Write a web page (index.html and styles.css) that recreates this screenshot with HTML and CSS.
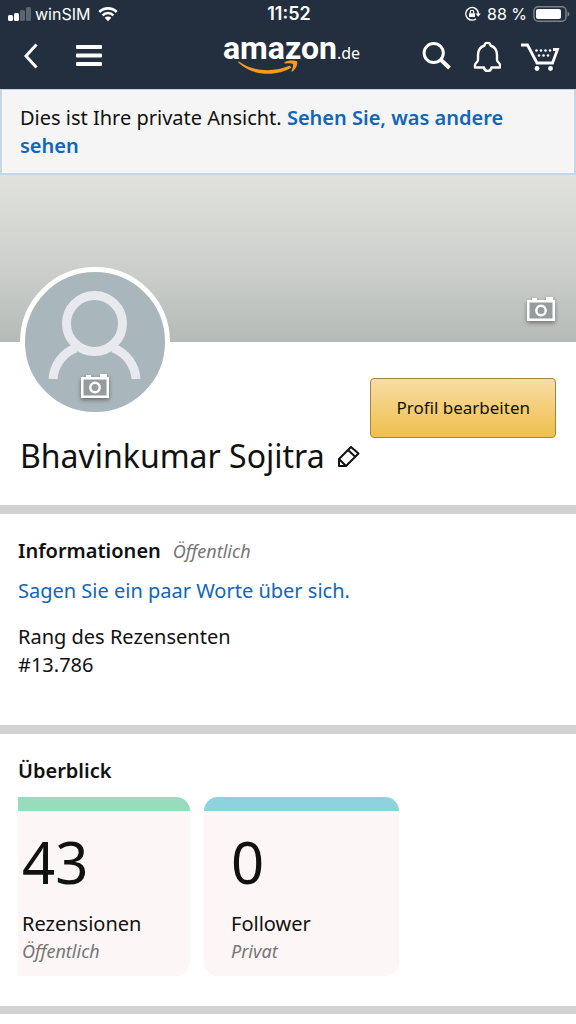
FILE: index.html
```html
<!DOCTYPE html>
<html lang="de">
<head>
<meta charset="utf-8">
<meta name="viewport" content="width=device-width, initial-scale=1">
<title>Profil</title>
<link rel="stylesheet" href="styles.css">
</head>
<body>
<svg class="defs" aria-hidden="true">
  <symbol id="camera" viewBox="0 0 32 28">
    <path d="M3 4h4V2h5v2h9V1h7v3h2v21H2V4z" fill="#fff"/>
    <path d="M4.500 6.500h23V22.500h-23z" fill="#949c9e"/>
    <circle cx="16" cy="14.500" r="4.700" fill="none" stroke="#fff" stroke-width="2.400"/>
  </symbol>
</svg>

<header class="top">
  <div class="status">
    <div class="status-group">
      <svg width="23" height="16" viewBox="0 0 23 16" aria-hidden="true">
        <g fill="#fff"><rect y="9" width="5" height="6" rx="1.500"/><rect x="6" y="7" width="5" height="8" rx="1.500"/></g>
        <g fill="#5c6471"><rect x="12" y="4" width="5" height="11" rx="1.500"/><rect x="18" y="1" width="5" height="14" rx="1.500"/></g>
      </svg>
      <span class="carrier">winSIM</span>
      <svg class="wifi" width="20" height="16" viewBox="0 0 20 16" fill="none" stroke="#fff" stroke-width="2.600" aria-hidden="true">
        <path d="M1.300 6a12.300 12.300 0 0 1 17.400 0M4.600 9.300a7.600 7.600 0 0 1 10.800 0"/>
        <path d="M10 15.200 6.700 11.800a4.700 4.700 0 0 1 6.600 0z" fill="#fff" stroke="none"/>
      </svg>
    </div>
    <time class="clock">11:52</time>
    <div class="status-group status-end">
      <svg width="17" height="16" viewBox="0 0 17 16" fill="none" stroke="#fff" stroke-width="1.500" aria-hidden="true">
        <path d="M11 2.200A6.300 6.300 0 1 0 12 12.800M10.500 2a6.300 6.300 0 0 1 3.700 6"/>
        <path d="m11.500 7.500 2.700 3.200 2.600-3.200z" fill="#fff" stroke="none"/>
        <path d="M5 7.300h6V11H5z" fill="#fff" stroke="none"/><path d="M6.300 7.500V6a1.700 1.700 0 0 1 3.400 0v1.500" stroke-width="1.200"/>
      </svg>
      <span>88 %</span>
      <svg width="37" height="16" viewBox="0 0 37 16" aria-hidden="true">
        <rect x="1" y=".800" width="32" height="14.400" rx="4" fill="none" stroke="#7b828c" stroke-width="1.500"/>
        <rect x="3" y="3" width="25" height="10" rx="2" fill="#fff"/>
        <path d="M34.500 5.500q2 .5 2 2.500t-2 2.500z" fill="#7b828c"/>
      </svg>
    </div>
  </div>
  <nav class="nav" aria-label="Hauptnavigation">
    <div class="nav-group">
      <button class="icon-btn" aria-label="Zurück"><svg width="15" height="26" viewBox="0 0 15 26" fill="none" stroke="#fff" stroke-width="3"><path d="M13.500 1.500 3 13l10.500 11.500"/></svg></button>
      <button class="icon-btn" aria-label="Menü"><svg width="26" height="24" viewBox="0 0 26 24" fill="#fff"><rect y="1" width="26" height="4" rx="1"/><rect y="9.500" width="26" height="4" rx="1"/><rect y="18" width="26" height="4" rx="1"/></svg></button>
    </div>
    <a class="logo" href="#" aria-label="amazon.de"><span class="logo-name">amazon</span><span class="logo-tld">.de</span>
      <svg class="smile" width="62" height="15" viewBox="0 0 62 15" fill="#f79b1e" aria-hidden="true">
        <path d="M1 1.500C15 12 36 12.500 52 5.500l1.300 2.300C39 16.500 14 16.500 .300 2.600q-.5-1.500.7-1.100z"/>
        <path d="M46.500 2.500C49 .3 56 0 59 1.300c1 3.200-1 7.500-4.200 10-1 .7-1.700.2-1.200-.8 1-2.300 1.900-5 1.300-6.300-1-1.100-4.300-1-7.400-.6-1 0-1.500-.5-1-1.100z"/>
      </svg>
    </a>
    <div class="nav-group nav-end">
      <button class="icon-btn" aria-label="Suche"><svg width="30" height="30" viewBox="0 0 30 30" fill="none" stroke="#fff" stroke-width="3"><circle cx="11.700" cy="12" r="9.600"/><path d="m18.500 18.500 9 8.500" stroke-width="4"/></svg></button>
      <button class="icon-btn" aria-label="Mitteilungen"><svg width="30" height="32" viewBox="0 0 30 32" fill="none" stroke="#fff" stroke-width="2.400" stroke-linejoin="round"><path d="M13.500 5.500C13.500 2 19.500 2 19.500 5.500c4.500 1.500 6.500 5.500 6.500 9.500V20c0 2 3 3 3 5v2.500h-8.500C20 32 13.500 32 13 27.500H4V25c0-2 3-3 3-5v-5c0-4 2-8 6.500-9.500z"/></svg></button>
      <button class="icon-btn" aria-label="Einkaufswagen"><svg width="40" height="32" viewBox="0 0 40 32" fill="none" stroke="#fff" stroke-width="2.800"><path d="M1 5h6.500L17 23h15.500L37.500 9.500H33"/><g fill="#fff" stroke="none"><circle cx="17" cy="28.500" r="2.400"/><circle cx="30.500" cy="28.500" r="2.400"/><circle cx="16.500" cy="10.500" r="1.300"/><circle cx="21" cy="10.500" r="1.300"/><circle cx="25.500" cy="10.500" r="1.300"/><circle cx="30" cy="10.500" r="1.300"/><circle cx="19" cy="15.500" r="1.300"/><circle cx="23.500" cy="15.500" r="1.300"/><circle cx="28" cy="15.500" r="1.300"/></g></svg></button>
    </div>
  </nav>
</header>

<main>
  <p class="notice">Dies ist Ihre private Ansicht. <a href="#">Sehen Sie, was andere sehen</a></p>

  <section class="profile">
    <div class="cover">
      <button class="icon-btn" aria-label="Titelbild ändern"><svg class="camera" width="32" height="28"><use href="#camera"/></svg></button>
    </div>
    <div class="avatar">
      <svg width="140" height="140" viewBox="0 0 140 140" fill="none" stroke="#e8e9ee" stroke-width="9" aria-hidden="true">
        <circle cx="69.500" cy="51.500" r="28"/>
        <path d="M28 107c1-13 9-26 23-31M111 107c-1-13-9-26-23-31"/>
      </svg>
      <button class="icon-btn avatar-camera" aria-label="Profilbild ändern"><svg class="camera" width="32" height="28"><use href="#camera"/></svg></button>
    </div>
    <button class="edit">Profil bearbeiten</button>
    <div class="name-row">
      <h1>Bhavinkumar Sojitra</h1>
      <button class="icon-btn" aria-label="Namen bearbeiten"><svg width="23" height="23" viewBox="0 0 23 23" fill="none" stroke="#111" stroke-width="2" stroke-linejoin="round"><path d="M2 21v-7L14 2l7.500 6.500L9 21zM11 5l7.500 7M2 14l7 7"/></svg></button>
    </div>
  </section>

  <section class="info">
    <div class="heading"><h2>Informationen</h2><span class="visibility">Öffentlich</span></div>
    <a class="bio-link" href="#">Sagen Sie ein paar Worte über sich.</a>
    <p class="rank">Rang des Rezensenten<br>#13.786</p>
  </section>

  <section class="overview">
    <h2>Überblick</h2>
    <div class="cards">
      <article class="card reviews"><strong>43</strong><span>Rezensionen</span><span class="visibility">Öffentlich</span></article>
      <article class="card followers"><strong>0</strong><span>Follower</span><span class="visibility">Privat</span></article>
    </div>
  </section>
</main>
</body>
</html>
```
FILE: styles.css
```css
* { box-sizing: border-box; }
body {
  margin: 0;
  background: #fff;
  color: #111;
  font-family: "Noto Sans", "Open Sans", sans-serif;
  font-size: 20px;
  line-height: 28px;
}
h1, h2, p { margin: 0; }
h2 { font-size: 20px; font-weight: 600; line-height: 28px; }
a { color: #0f66ba; text-decoration: none; }
svg { display: block; flex: none; }
.defs { position: absolute; width: 0; height: 0; }
.icon-btn { padding: 0; border: 0; background: none; cursor: pointer; }

.top { background: #232f3e; color: #fff; padding-bottom: 5px; }
.status {
  display: grid;
  grid-template-columns: 1fr auto 1fr;
  align-items: center;
  height: 28px;
  padding: 0 6px 0 8px;
  font-family: Inter, Roboto, sans-serif;
  font-size: 16px;
}
.status-group { display: flex; align-items: center; gap: 4px; }
.status-end { justify-content: flex-end; gap: 6px; }
.wifi { margin-left: 4px; }
.clock { font-size: 18px; font-weight: 600; }
.nav {
  display: grid;
  grid-template-columns: 1fr auto 1fr;
  align-items: center;
  height: 56px;
  padding: 0 16px 0 23px;
}
.nav-group { display: flex; align-items: center; gap: 38px; }
.nav-end { justify-content: flex-end; gap: 19px; }
.logo {
  position: relative;
  display: flex;
  align-items: baseline;
  height: 44px;
  color: #fff;
}
.logo-name { font: 700 32px/28px Roboto, "Liberation Sans", sans-serif; }
.logo-tld { font-size: 16px; }
.smile { position: absolute; left: 15px; bottom: 3px; }

.notice {
  padding: 14px 18px 13px;
  border: 2px solid #c3d7e6;
  border-top-width: 1px;
  background: #f5f5f5;
}
.notice a { font-weight: 600; }

.profile {
  display: grid;
  grid-template-columns: auto 1fr;
  padding-bottom: 28px;
  border-bottom: 9px solid #d2d2d2;
}
.cover {
  grid-column: 1 / -1;
  display: flex;
  justify-content: flex-end;
  align-items: flex-end;
  height: 167px;
  padding: 0 19px 18px;
  background: linear-gradient(#e1e2de, #cacdc9 60%, #b5bab8);
}
.camera { filter: drop-shadow(0 2px 2px #0006); }
.avatar {
  position: relative;
  grid-area: 2 / 1;
  width: 150px;
  height: 150px;
  margin: -75px 0 0 20px;
  border: 5px solid #fff;
  border-radius: 50%;
  background: #a9b6bb;
}
.avatar-camera { position: absolute; left: 54px; bottom: 11px; }
.edit {
  grid-area: 2 / 2 / 4 / 3;
  justify-self: end;
  align-self: start;
  height: 60px;
  margin: 36px 20px 0 0;
  padding: 0 25px;
  border: 1px solid #a08545;
  border-radius: 4px;
  background: linear-gradient(#f7dda5, #f0bf4b);
  color: #111;
  font: inherit;
  font-size: 17px;
}
.name-row {
  grid-area: 3 / 1 / 4 / 3;
  justify-self: start;
  display: flex;
  align-items: center;
  gap: 12px;
  margin-top: 18px;
  padding-left: 20px;
}
h1 { font-size: 32px; font-weight: 400; line-height: 42px; }

.visibility { color: #767676; font-size: 18px; font-style: italic; }
.info { padding: 23px 18px 46px; border-bottom: 9px solid #d2d2d2; }
.heading { display: flex; align-items: baseline; gap: 12px; }
.bio-link { display: block; margin-top: 12px; }
.rank { margin-top: 18px; }
.overview { padding: 23px 18px 30px; border-bottom: 8px solid #d2d2d2; }
.cards { display: flex; gap: 14px; margin-top: 12px; }
.card {
  display: flex;
  flex-direction: column;
  width: 195px;
  padding: 14px 27px 12px;
  border-radius: 14px;
  background: linear-gradient(#8dd2dc 14px, #fcf6f6 14px);
}
.reviews {
  width: 172px;
  padding-left: 4px;
  border-radius: 0 14px 14px 0;
  background: linear-gradient(#98dcbd 14px, #fcf6f6 14px);
}
.card strong { margin: 22px 0 19px; font-size: 58px; font-weight: 400; line-height: 58px; }
.card .visibility { line-height: 26px; }
```
